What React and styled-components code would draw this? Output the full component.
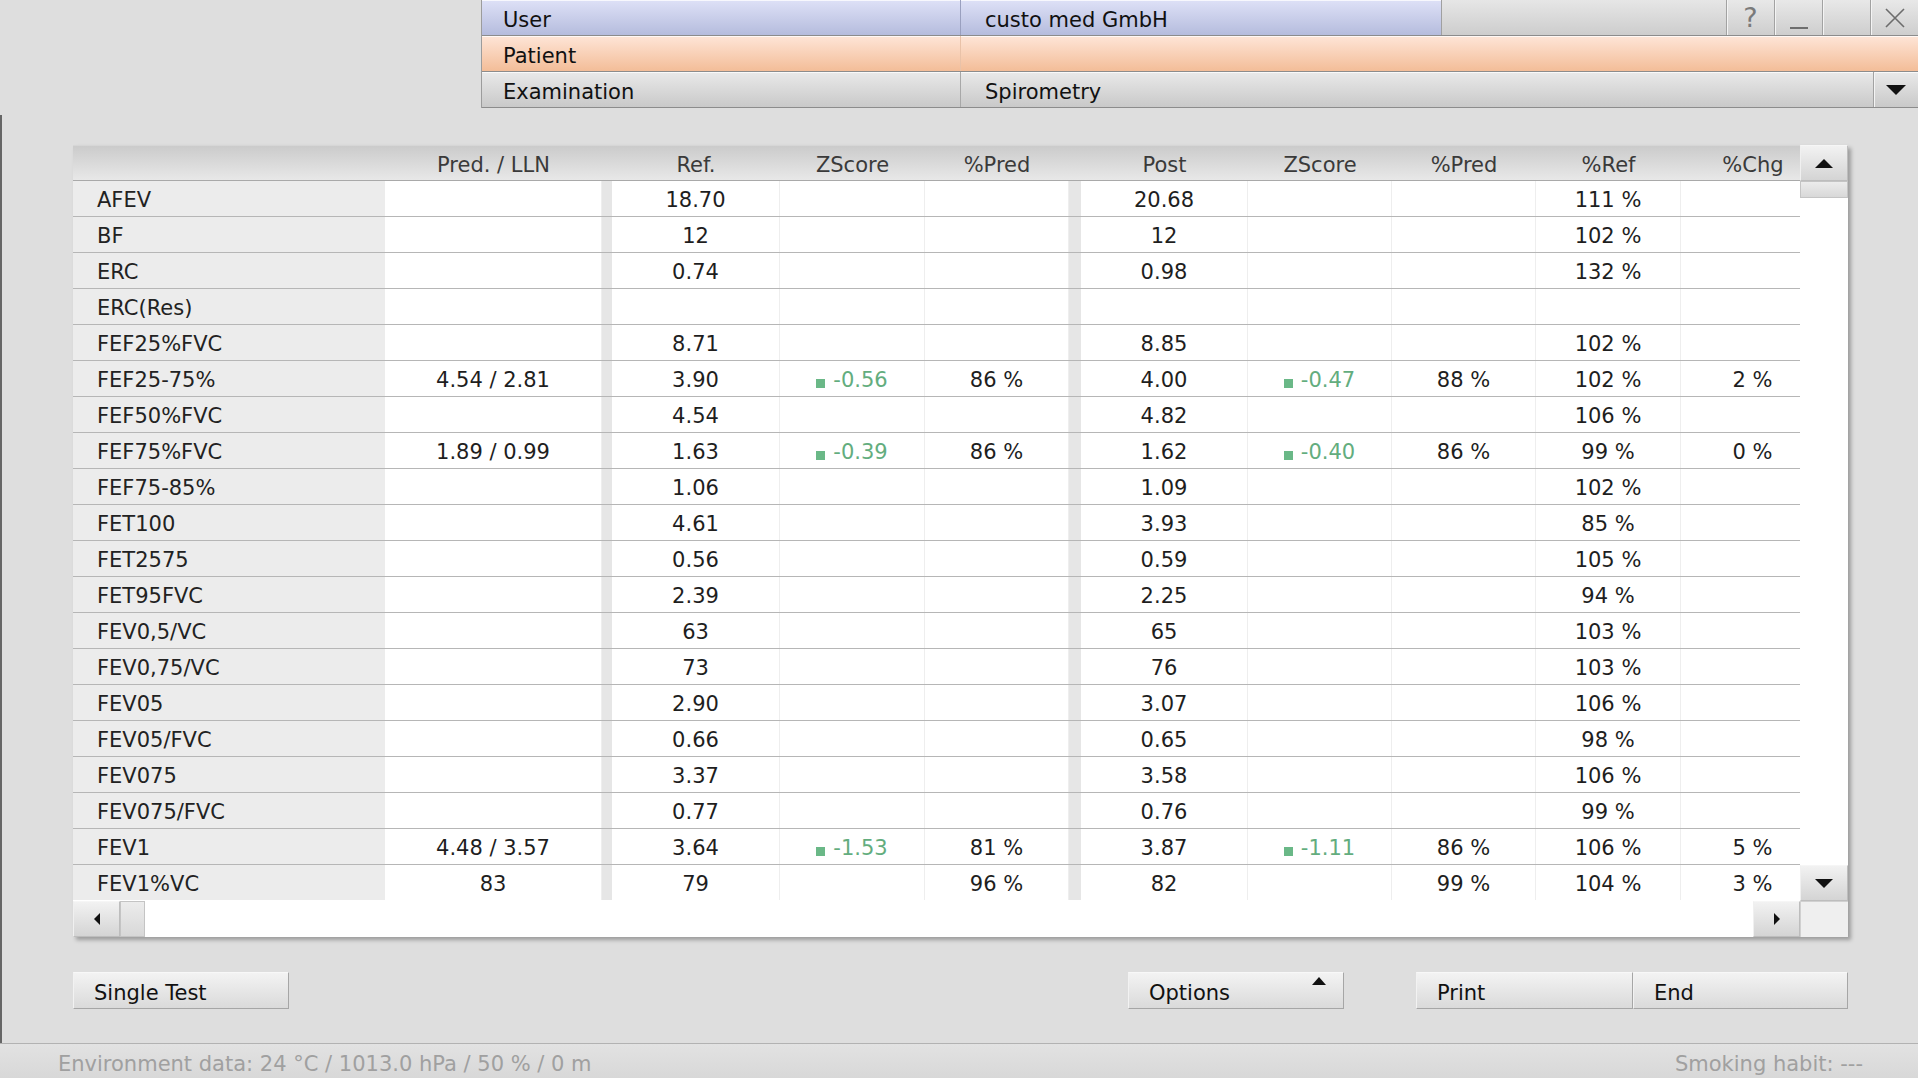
import React from 'react';
import styled, { createGlobalStyle } from 'styled-components';

const GlobalStyle = createGlobalStyle`
    html, body {
        margin: 0;
        padding: 0;
        background: #dedede;
    }
    body {
        font-family: "DejaVu Sans", Verdana, sans-serif;
        font-size: 21px;
        color: #1e1e1e;
    }
    * {
        box-sizing: border-box;
    }
`

const COLUMNS = '312px 217px 10px 168px 145px 144px 12px 167px 144px 144px 145px 144px';

const Page = styled.div`
    width: 1918px;
    height: 1078px;
    display: flex;
    flex-direction: column;
    overflow: hidden;
    background: #dedede;
`

const TopBar = styled.div`
    display: flex;
    flex-shrink: 0;
    height: 108px;
    padding-left: 481px;
`

const InfoPanel = styled.div`
    flex: 1;
    display: flex;
    flex-direction: column;
    border-left: 1px solid #9c9c9c;
`

const InfoRow = styled.div`
    height: 36px;
    display: flex;
    background: ${props => props.bg};
    border-bottom: 1px solid #8c8c8c;
    box-shadow: inset 0 1px 0 rgba(255, 255, 255, 0.75);
`

const InfoLabel = styled.div`
    width: 478px;
    display: flex;
    align-items: center;
    padding-left: 21px;
    padding-top: 5px;
    color: #111;
`

const InfoValue = styled.div`
    width: ${props => props.grow ? 'auto' : '481px'};
    flex: ${props => props.grow ? 1 : 'none'};
    display: flex;
    align-items: center;
    padding-left: 24px;
    padding-top: 5px;
    border-left: 1px solid ${props => props.line || '#a8a8a8'};
    color: #111;
`

const Filler = styled.div`
    flex: 1;
    background: linear-gradient(to bottom, #e6e6e6, #cdcdcd);
    border-left: 1px solid #a0a0a0;
`

const WinButton = styled.div`
    width: 48px;
    display: flex;
    align-items: center;
    justify-content: center;
    background: linear-gradient(to bottom, #e8e8e8, #cecece);
    border-left: 1px solid #a2a2a2;
    box-shadow: inset 1px 0 0 #f4f4f4;
    color: #7a7a7a;
    font-size: 27px;
`

const Minimize = styled.span`
    width: 18px;
    height: 2px;
    margin-top: 20px;
    background: #6e6e6e;
`

const DropButton = styled.div`
    width: 45px;
    display: flex;
    align-items: center;
    justify-content: center;
    border-left: 1px solid #a2a2a2;
    box-shadow: inset 1px 0 0 #f4f4f4;
`

const Triangle = styled.span`
    width: 0;
    height: 0;
    border-left: ${props => props.dir === 'right' ? `${props.h}px solid #111` : props.dir === 'left' ? 'none' : `${props.w / 2}px solid transparent`};
    border-right: ${props => props.dir === 'left' ? `${props.h}px solid #111` : props.dir === 'right' ? 'none' : `${props.w / 2}px solid transparent`};
    border-top: ${props => props.dir === 'down' ? `${props.h}px solid #111` : (props.dir === 'up' ? 'none' : `${props.w / 2}px solid transparent`)};
    border-bottom: ${props => props.dir === 'up' ? `${props.h}px solid #111` : (props.dir === 'down' ? 'none' : `${props.w / 2}px solid transparent`)};
`

const Main = styled.div`
    flex: 1;
    display: flex;
    flex-direction: column;
    margin-top: 7px;
    padding: 30px 70px 0 71px;
    border-left: 2px solid #666;
`

const TablePanel = styled.div`
    width: 1775px;
    height: 792px;
    display: grid;
    grid-template-columns: 1727px 48px;
    grid-template-rows: 756px 36px;
    background: #fff;
    box-shadow: 3px 3px 4px rgba(0, 0, 0, 0.3);
`

const Viewport = styled.div`
    overflow: hidden;
    display: flex;
    flex-direction: column;
`

const HeaderRow = styled.div`
    display: grid;
    grid-template-columns: ${COLUMNS};
    height: 36px;
    flex-shrink: 0;
    background: linear-gradient(to bottom, #cbcbcb, #e8e8e8);
    border-top: 1px solid #d6d6d6;
    border-bottom: 1px solid #a9a9a9;
`

const HeaderCell = styled.div`
    display: flex;
    align-items: center;
    justify-content: center;
    color: #3a3a3a;
    padding-top: 3px;
`

const Row = styled.div`
    display: grid;
    grid-template-columns: ${COLUMNS};
    height: 36px;
    flex-shrink: 0;
    border-bottom: 1px solid ${props => props.last ? 'transparent' : '#b6b6b6'};
`

const LabelCell = styled.div`
    display: flex;
    align-items: center;
    padding-left: 24px;
    padding-top: 3px;
    background: #ececec;
    color: #222;
`

const SepCell = styled.div`
    background: #e6e6e6;
`

const DataCell = styled.div`
    display: flex;
    align-items: center;
    justify-content: center;
    padding-top: 3px;
    background: #fff;
    border-right: 1px solid #eeeeee;
    color: ${props => props.z ? '#63ad7e' : '#1e1e1e'};
`

const ZMark = styled.span`
    display: inline-block;
    width: 9px;
    height: 9px;
    margin-right: 8px;
    margin-top: 6px;
    background: #6ab887;
`

const VScroll = styled.div`
    display: flex;
    flex-direction: column;
    background: #fff;
`

const ScrollButton = styled.div`
    width: ${props => props.w ? `${props.w}px` : '100%'};
    height: ${props => props.h ? `${props.h}px` : '100%'};
    flex-shrink: 0;
    display: flex;
    align-items: center;
    justify-content: center;
    background: linear-gradient(to bottom, #f2f2f2, #d4d4d4);
    border: 1px solid #bdbdbd;
    border-top-color: #f6f6f6;
    border-left-color: #f0f0f0;
`

const Thumb = styled.div`
    width: ${props => props.w ? `${props.w}px` : '100%'};
    height: ${props => props.h ? `${props.h}px` : '100%'};
    flex-shrink: 0;
    background: linear-gradient(to bottom, #ececec, #d8d8d8);
    border: 1px solid #c4c4c4;
`

const Track = styled.div`
    flex: 1;
    background: #fff;
`

const HScroll = styled.div`
    display: flex;
    background: #fff;
`

const Corner = styled.div`
    background: #efefef;
    border-left: 1px solid #d0d0d0;
    border-top: 1px solid #d0d0d0;
`

const ButtonBar = styled.div`
    display: flex;
    margin-top: 35px;
    width: 1775px;
`

const Button = styled.div`
    width: ${props => props.w}px;
    height: 37px;
    display: flex;
    align-items: center;
    justify-content: space-between;
    padding: 4px 17px 0 20px;
    background: linear-gradient(to bottom, #f3f3f3, #dadada);
    border: 1px solid #a6a6a6;
    border-top-color: #f8f8f8;
    border-left-color: #f2f2f2;
    color: #111;
    margin-left: ${props => props.ml || 0}px;
`

const UpArrow = styled.span`
    align-self: flex-start;
    margin-top: 0;
    width: 0;
    height: 0;
    border-left: 7px solid transparent;
    border-right: 7px solid transparent;
    border-bottom: 8px solid #111;
`

const StatusBar = styled.div`
    height: 35px;
    flex-shrink: 0;
    display: flex;
    align-items: center;
    justify-content: space-between;
    padding: 5px 55px 0 58px;
    border-top: 1px solid #b2b2b2;
    background: linear-gradient(to bottom, #e2e2e2, #d8d8d8);
    color: #a0a0a0;
`

const headers = ['', 'Pred. / LLN', '', 'Ref.', 'ZScore', '%Pred', '', 'Post', 'ZScore', '%Pred', '%Ref', '%Chg'];

// label, pred, ref, z, %pred, post, z2, %pred2, %ref, %chg
const rows = [
    ['AFEV', '', '18.70', '', '', '20.68', '', '', '111 %', ''],
    ['BF', '', '12', '', '', '12', '', '', '102 %', ''],
    ['ERC', '', '0.74', '', '', '0.98', '', '', '132 %', ''],
    ['ERC(Res)', '', '', '', '', '', '', '', '', ''],
    ['FEF25%FVC', '', '8.71', '', '', '8.85', '', '', '102 %', ''],
    ['FEF25-75%', '4.54 / 2.81', '3.90', '-0.56', '86 %', '4.00', '-0.47', '88 %', '102 %', '2 %'],
    ['FEF50%FVC', '', '4.54', '', '', '4.82', '', '', '106 %', ''],
    ['FEF75%FVC', '1.89 / 0.99', '1.63', '-0.39', '86 %', '1.62', '-0.40', '86 %', '99 %', '0 %'],
    ['FEF75-85%', '', '1.06', '', '', '1.09', '', '', '102 %', ''],
    ['FET100', '', '4.61', '', '', '3.93', '', '', '85 %', ''],
    ['FET2575', '', '0.56', '', '', '0.59', '', '', '105 %', ''],
    ['FET95FVC', '', '2.39', '', '', '2.25', '', '', '94 %', ''],
    ['FEV0,5/VC', '', '63', '', '', '65', '', '', '103 %', ''],
    ['FEV0,75/VC', '', '73', '', '', '76', '', '', '103 %', ''],
    ['FEV05', '', '2.90', '', '', '3.07', '', '', '106 %', ''],
    ['FEV05/FVC', '', '0.66', '', '', '0.65', '', '', '98 %', ''],
    ['FEV075', '', '3.37', '', '', '3.58', '', '', '106 %', ''],
    ['FEV075/FVC', '', '0.77', '', '', '0.76', '', '', '99 %', ''],
    ['FEV1', '4.48 / 3.57', '3.64', '-1.53', '81 %', '3.87', '-1.11', '86 %', '106 %', '5 %'],
    ['FEV1%VC', '83', '79', '', '96 %', '82', '', '99 %', '104 %', '3 %'],
];

const ZValue = ({ value }) => (
    <DataCell z>
        {value && <><ZMark />{value}</>}
    </DataCell>
)

const DataRow = ({ row, last }) => {
    const [label, pred, ref, z, pp, post, z2, pp2, pref, chg] = row;
    return (
        <Row last={last}>
            <LabelCell>{label}</LabelCell>
            <DataCell>{pred}</DataCell>
            <SepCell />
            <DataCell>{ref}</DataCell>
            <ZValue value={z} />
            <DataCell>{pp}</DataCell>
            <SepCell />
            <DataCell>{post}</DataCell>
            <ZValue value={z2} />
            <DataCell>{pp2}</DataCell>
            <DataCell>{pref}</DataCell>
            <DataCell>{chg}</DataCell>
        </Row>
    )
}

const CloseIcon = () => (
    <svg width="22" height="22" viewBox="0 0 22 22">
        <path d="M2 2 L20 20 M20 2 L2 20" stroke="#6c6c6c" strokeWidth="1.6" fill="none" />
    </svg>
)

const App = () => {
    return (
        <Page>
            <GlobalStyle />
            <TopBar>
                <InfoPanel>
                    <InfoRow bg="linear-gradient(to bottom, #dee1f7, #b5bcdd)">
                        <InfoLabel>User</InfoLabel>
                        <InfoValue line="#9aa0bf">custo med GmbH</InfoValue>
                        <Filler />
                        <WinButton>?</WinButton>
                        <WinButton><Minimize /></WinButton>
                        <WinButton />
                        <WinButton><CloseIcon /></WinButton>
                    </InfoRow>
                    <InfoRow bg="linear-gradient(to bottom, #fee5d7, #f3bd98)">
                        <InfoLabel>Patient</InfoLabel>
                        <InfoValue grow line="#e9c2a8" />
                    </InfoRow>
                    <InfoRow bg="linear-gradient(to bottom, #e9e9e9, #c9c9c9)">
                        <InfoLabel>Examination</InfoLabel>
                        <InfoValue grow>Spirometry</InfoValue>
                        <DropButton><Triangle dir="down" w={20} h={10} /></DropButton>
                    </InfoRow>
                </InfoPanel>
            </TopBar>
            <Main>
                <TablePanel>
                    <Viewport>
                        <HeaderRow>
                            {headers.map((h, i) => <HeaderCell key={i}>{h}</HeaderCell>)}
                        </HeaderRow>
                        {rows.map((r, i) => <DataRow key={r[0]} row={r} last={i === rows.length - 1} />)}
                    </Viewport>
                    <VScroll>
                        <ScrollButton h={36}><Triangle dir="up" w={18} h={9} /></ScrollButton>
                        <Thumb h={17} />
                        <Track />
                        <ScrollButton h={36}><Triangle dir="down" w={18} h={9} /></ScrollButton>
                    </VScroll>
                    <HScroll>
                        <ScrollButton w={47}><Triangle dir="left" w={12} h={6} /></ScrollButton>
                        <Thumb w={25} />
                        <Track />
                        <ScrollButton w={47}><Triangle dir="right" w={12} h={6} /></ScrollButton>
                    </HScroll>
                    <Corner />
                </TablePanel>
                <ButtonBar>
                    <Button w={216}>Single Test</Button>
                    <Button w={216} ml={839}>Options<UpArrow /></Button>
                    <Button w={217} ml={72}>Print</Button>
                    <Button w={215}>End</Button>
                </ButtonBar>
            </Main>
            <StatusBar>
                <span>Environment data: 24 °C / 1013.0 hPa / 50 % / 0 m</span>
                <span>Smoking habit: ---</span>
            </StatusBar>
        </Page>
    )
}

export default App;
